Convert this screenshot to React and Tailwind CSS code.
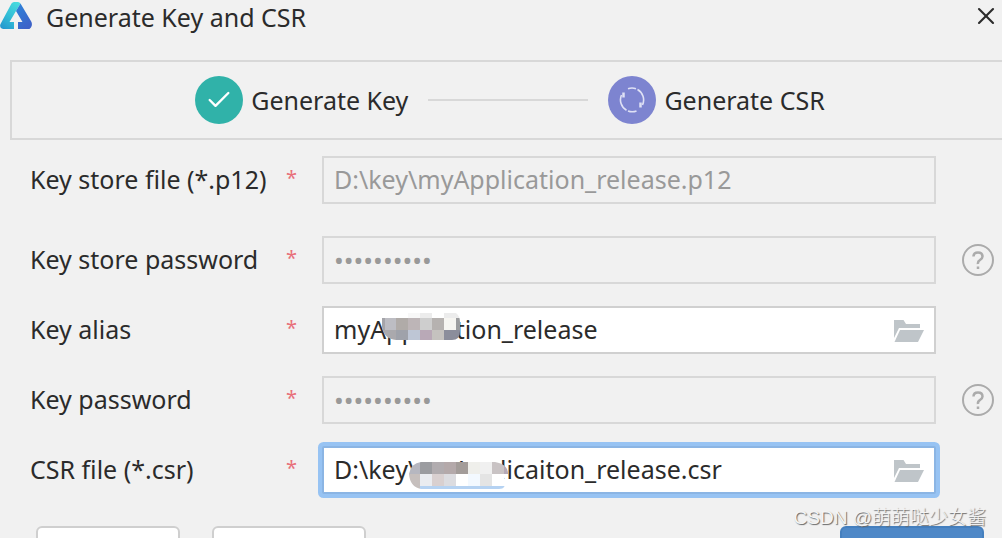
import { Check, X } from 'lucide-react';

const FIELDS = [
  { id: 'store-file', label: 'Key store file (*.p12)', value: 'D:\\key\\myApplication_release.p12', disabled: true, gap: 'mb-8' },
  { id: 'store-password', label: 'Key store password', value: '0123456789', type: 'password', disabled: true, help: true, gap: 'mb-[22px]' },
  { id: 'key-alias', label: 'Key alias', value: 'myApplication_release', browse: true, mask: 'alias', gap: 'mb-[22px]' },
  { id: 'key-password', label: 'Key password', value: '0123456789', type: 'password', disabled: true, help: true, gap: 'mb-[22px]' },
  { id: 'csr-file', label: 'CSR file (*.csr)', value: 'D:\\key\\myApplicaiton_release.csr', browse: true, focused: true, mask: 'csr', gap: 'mb-8' },
];

function Logo() {
  return (
    <svg width="34" height="30" viewBox="0 0 34 30" className="shrink-0">
      <defs>
        <linearGradient id="logo-left" x1="0.8" y1="0" x2="0.2" y2="1">
          <stop offset="0" stopColor="#48dade" />
          <stop offset="0.55" stopColor="#32bdd6" />
          <stop offset="1" stopColor="#2499cf" />
        </linearGradient>
        <linearGradient id="logo-right" x1="0" y1="0" x2="0.6" y2="1">
          <stop offset="0" stopColor="#2c84da" />
          <stop offset="1" stopColor="#3d62c8" />
        </linearGradient>
      </defs>
      <path d="M11.500 3.500Q12.500 2 14 2h4q1.500 0 2.500 1.500L16 11 9.500 22H14v7H3q-4-1-2.500-5z" fill="url(#logo-left)" />
      <path d="M20.500 3.500L31.500 22q1.500 4-2 7H18v-7h4.500L16 11z" fill="url(#logo-right)" />
    </svg>
  );
}

function SyncIcon() {
  return (
    <svg width="26" height="26" viewBox="0 0 26 26" fill="none" stroke="#dfe1f5" strokeWidth="1.600">
      <path d="M9 1.700A12 12 0 0 1 17 1.700" />
      <path d="M18.500 2.500A12 12 0 0 1 23.500 18" />
      <path d="M21.500 15.500v5" strokeWidth="2.500" />
      <path d="M17.500 24A12 12 0 0 1 9 24" />
      <path d="M7.500 23.300A12 12 0 0 1 2.500 8" />
      <path d="M4.500 5.500v5" strokeWidth="2.500" />
    </svg>
  );
}

function FolderIcon() {
  return (
    <svg width="30" height="24" viewBox="0 0 30 24" fill="#bfc5c9">
      <path d="M0 2h9.500l2.500 4h14v4H5L0 20z" />
      <path d="M6 12h24l-6 12H0.500z" />
    </svg>
  );
}

function HelpIcon() {
  return (
    <svg width="34" height="34" viewBox="0 0 34 34" fill="none" stroke="#ababab" strokeWidth="2">
      <circle cx="17" cy="17" r="15" />
      <path d="M12.500 13.500q0-4 4.500-4t4.500 4q0 2-2.500 3.500t-2 4" strokeWidth="2.500" />
      <path d="M17 23.500v2.500" strokeWidth="2.500" />
    </svg>
  );
}

// Pixelated cover over the private part of a value
const MASKS = {
  alias: {
    width: 78,
    height: 27,
    place: 'left-[58px] top-[5px]',
    clip: 'M0 5H26V0H74Q78 3 78 9V18Q78 27 70 27H14Q2 26 0 14z',
    cells: [
      [0, 5, 3, 12, '#a5a5aa'], [3, 5, 11, 12, '#bdbdc3'], [14, 5, 12, 12, '#b0aba8'], [26, 5, 12, 12, '#bdb5b7'],
      [38, 5, 12, 12, '#cecece'], [50, 5, 12, 12, '#b6b2b0'], [62, 5, 12, 12, '#f6f5f1'], [74, 5, 4, 12, '#9c9d9f'],
      [26, 0, 12, 5, '#f8f8f8'], [38, 0, 12, 5, '#ececec'], [50, 0, 12, 5, '#ffffff'], [62, 0, 16, 5, '#ececec'],
      [0, 17, 14, 10, '#aaa9ad'], [14, 17, 12, 10, '#9fa2aa'], [26, 17, 12, 10, '#bec6d5'], [38, 17, 12, 10, '#b9a9b7'],
      [50, 17, 12, 10, '#c5c2bf'], [62, 17, 16, 10, '#8b8d9b'],
    ],
  },
  csr: {
    width: 99,
    height: 27,
    place: 'left-[85px] top-3.5',
    clip: 'M12 0H86Q99 2 99 12Q97 12 95 18Q98 27 90 27H12Q1 25 0 12Q2 1 12 0z',
    cells: [
      [0, 0, 11, 12, '#b6b7c0'], [11, 0, 12, 12, '#9b9ca0'], [23, 0, 12, 12, '#b1acaf'], [35, 0, 12, 12, '#b4a9aa'],
      [47, 0, 12, 12, '#a39c99'], [59, 0, 12, 12, '#efefeb'], [71, 0, 12, 12, '#f0f0f0'], [83, 0, 12, 12, '#c9c3c4'], [95, 0, 4, 12, '#b5a9b7'],
      [0, 12, 11, 15, '#c6bfbd'], [11, 12, 12, 12, '#eaecf0'], [23, 12, 12, 12, '#d9d0d0'], [35, 12, 12, 12, '#dcdce0'],
      [47, 12, 12, 12, '#ffffff'], [59, 12, 12, 12, '#f3f9ff'], [71, 12, 12, 12, '#e4e4e4'], [83, 12, 16, 12, '#ffffff'],
      [11, 24, 88, 3, '#b5d2f2'],
    ],
  },
};

function Mask({ name }) {
  const mask = MASKS[name];
  return (
    <svg
      width={mask.width}
      height={mask.height}
      shapeRendering="crispEdges"
      aria-hidden="true"
      className={`pointer-events-none absolute ${mask.place}`}
    >
      <clipPath id={`mask-${name}`}>
        <path d={mask.clip} />
      </clipPath>
      <g clipPath={`url(#mask-${name})`}>
        {mask.cells.map(([x, y, w, h, fill]) => (
          <rect key={`${x}-${y}`} x={x} y={y} width={w} height={h} fill={fill} />
        ))}
      </g>
    </svg>
  );
}

function Step({ color, icon, label }) {
  return (
    <div className="flex items-center gap-2">
      <span className={`flex size-12 shrink-0 items-center justify-center rounded-full ${color}`}>{icon}</span>
      <span className="whitespace-nowrap">{label}</span>
    </div>
  );
}

function Field({ field }) {
  const { id, label, value, type = 'text', disabled, help, browse, focused, mask, gap } = field;
  return (
    <div className={`flex h-12 items-center ${gap}`}>
      <label htmlFor={id} className="w-64 shrink-0 whitespace-nowrap pb-0.5">
        {label}
      </label>
      <span className="w-9 shrink-0 pb-1 text-xl leading-8 text-[#e8707a]">*</span>
      <div
        className={`relative flex h-12 min-w-0 flex-1 items-center border-2 px-2.5 ${
          disabled ? 'border-[#d8d8d8]' : 'bg-white'
        } ${focused ? 'rounded-xs border-[#8bb5e4] ring-4 ring-[#97c3f3]' : 'border-[#d0d0d0]'}`}
      >
        <input
          id={id}
          type={type}
          defaultValue={value}
          disabled={disabled}
          className={`min-w-0 flex-1 bg-transparent outline-none disabled:text-[#999999] ${
            type === 'password' ? 'text-[26px]' : 'pb-0.5'
          }`}
        />
        {browse && (
          <button type="button" aria-label={`Browse ${label}`} className="shrink-0">
            <FolderIcon />
          </button>
        )}
        {mask && <Mask name={mask} />}
      </div>
      <div className="flex w-[66px] shrink-0 justify-end pr-[7px]">
        {help && (
          <button type="button" aria-label={`Help for ${label}`}>
            <HelpIcon />
          </button>
        )}
      </div>
    </div>
  );
}

export default function App() {
  return (
    <main className="relative h-screen overflow-hidden bg-[#f1f1f1] font-['Noto_Sans','Noto_Sans_CJK_SC',sans-serif] text-[25px] leading-9 text-[#2b2b2b]">
      <header className="flex h-[60px] items-start justify-between pr-0.5">
        <div className="flex items-start gap-3">
          <Logo />
          <h1 className="leading-[34px]">Generate Key and CSR</h1>
        </div>
        <button type="button" aria-label="Close" className="pt-0.5">
          <X size={28} strokeWidth={1.8} />
        </button>
      </header>

      <section className="ml-2.5 flex h-20 items-center justify-center gap-5 border-y-2 border-l-2 border-[#d8d8d8] pl-1.5">
        <Step color="bg-[#30b2a9]" label="Generate Key" icon={<Check size={28} strokeWidth={2} className="text-white" />} />
        <span className="h-0.5 w-40 bg-[#d8d8d8]" />
        <Step color="bg-[#7d84d0]" label="Generate CSR" icon={<SyncIcon />} />
      </section>

      <form className="pl-[30px] pt-4">
        {FIELDS.map((field) => (
          <Field key={field.id} field={field} />
        ))}

        <div className="flex gap-8 pl-1.5 pr-[18px]">
          <button type="button" aria-label="Cancel" className="h-12 w-36 rounded-md border-2 border-[#cfcfcf] bg-white" />
          <button type="button" aria-label="Previous" className="h-12 w-[154px] rounded-md border-2 border-[#cfcfcf] bg-white" />
          <button type="button" aria-label="Finish" className="ml-auto h-12 w-36 rounded-md border-2 border-[#447fbe] bg-[#4e88c7]" />
        </div>
      </form>

      <span className="absolute bottom-0.5 right-4 font-['Liberation_Sans','Noto_Sans_CJK_SC',sans-serif] text-[19px] font-light text-[#f4f4f4] [text-shadow:1px_1px_1px_#666666]">
        CSDN @萌萌哒少女酱
      </span>
    </main>
  );
}
